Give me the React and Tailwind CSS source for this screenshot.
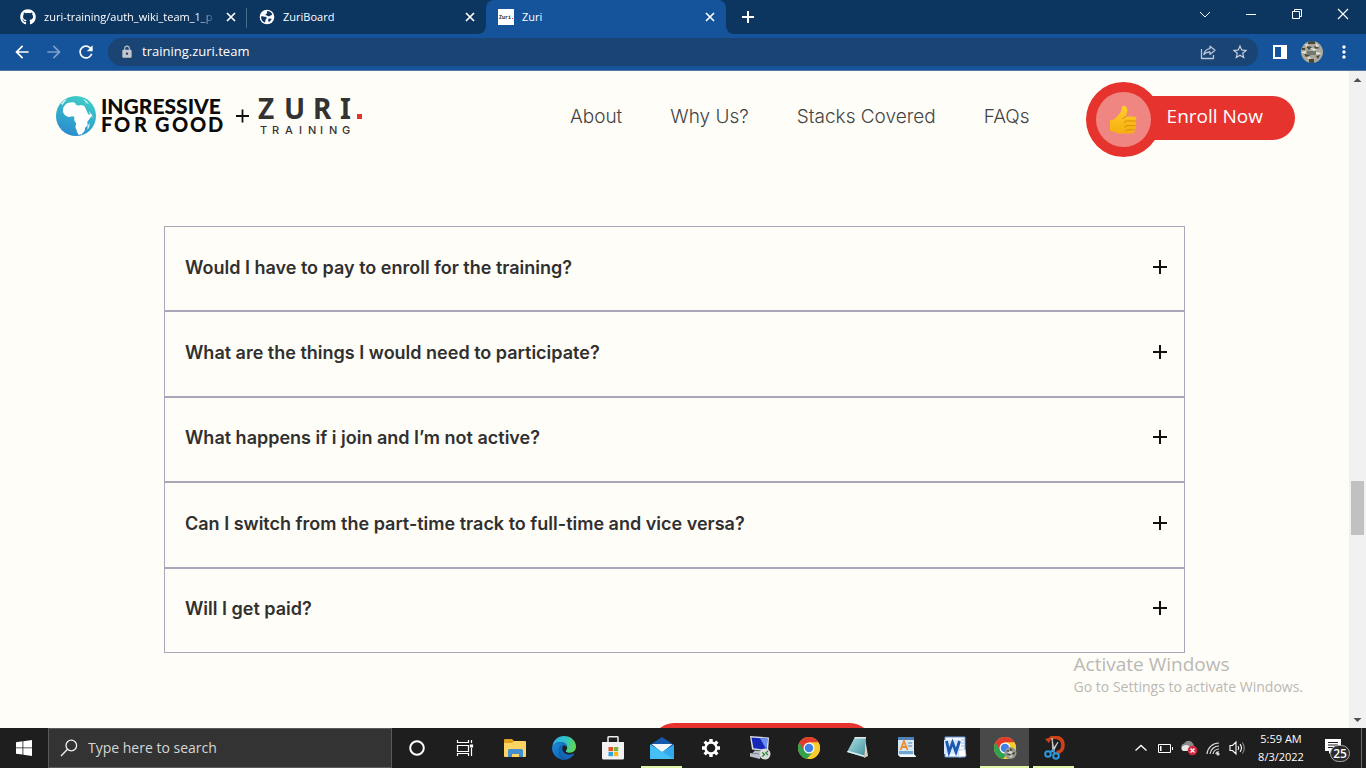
import React from "react";
import { FaGithub } from "react-icons/fa";
import { MdArrowBack, MdArrowForward, MdRefresh, MdLock, MdStarBorder, MdMoreVert } from "react-icons/md";

const questions = [
  "Would I have to pay to enroll for the training?",
  "What are the things I would need to participate?",
  "What happens if i join and I’m not active?",
  "Can I switch from the part-time track to full-time and vice versa?",
  "Will I get paid?",
];

const links = ["About", "Why Us?", "Stacks Covered", "FAQs"];

function GlobeFavicon() {
  return (
    <svg viewBox="0 0 16 16" className="h-4 w-4 shrink-0">
      <circle cx="8" cy="8" r="7.3" fill="#fff" />
      <path d="M2.2 7.2c1.7-.2 2.6.6 4.2.5 1.3 0 1.6 1.2 1 2-.8.9-1.2 1.300-1.100 3.900C3.700 12.800 1.700 10.500 2.200 7.200Z" fill="#0c355f" />
      <path d="M8.300 2.100c2.400.1 4.100 1.200 5 3.300-.7.900-1.700.6-2.200 1.400-.6.900-1.900.5-2.800-.1-.9-.5-1.900-.2-1.700-1.300.1-.8 1.100-.5 1.500-1.200.3-.7-.4-1.500.2-2.100Z" fill="#0c355f" />
      <path d="M9.800 9.600c1-.2 1.900.3 2.900.2-.5 1.500-1.600 2.700-3.100 3.300-.3-1.200-.8-2.900.2-3.500Z" fill="#0c355f" />
    </svg>
  );
}

function ZuriFavicon() {
  return (
    <svg viewBox="0 0 16 16" className="h-4 w-4 shrink-0">
      <rect width="16" height="16" fill="#fff" />
      <text x="1" y="9.700" fontSize="5" fontWeight="700" fontFamily="'Liberation Mono', monospace" fill="#222">Zuri</text>
      <rect x="14" y="9" width="1" height="1" fill="#d33" />
    </svg>
  );
}

function Tab({ icon, title, active, fade, divider }) {
  return (
    <div
      role="tab"
      aria-selected={!!active}
      className={
        active
          ? "relative flex w-60 items-center gap-2 rounded-t-lg bg-[#15539a] pr-2.5 pl-3"
          : "relative flex w-[239px] items-center gap-2 pr-2.5 pl-3"
      }
    >
      {icon}
      <span className={fade ? "min-w-0 flex-1 whitespace-nowrap [mask-image:linear-gradient(to_right,#000_88%,transparent)]" : "flex-1"}>{title}</span>
      <button aria-label={"Close " + title}>
        <svg viewBox="0 0 12 12" className="h-3 w-3" stroke="#fff" strokeWidth="1.700"><path d="m2 2 8 8M10 2l-8 8" /></svg>
      </button>
      {divider && <i className="absolute top-2 right-0 h-5 w-px bg-[#4a6c8f]" />}
      {active && (
        <>
          <svg viewBox="0 0 8 8" className="absolute bottom-0 -left-2 h-2 w-2"><path d="M8 0v8H0a8 8 0 0 0 8-8Z" fill="#15539a" /></svg>
          <svg viewBox="0 0 8 8" className="absolute -right-2 bottom-0 h-2 w-2"><path d="M0 0v8h8a8 8 0 0 1-8-8Z" fill="#15539a" /></svg>
        </>
      )}
    </div>
  );
}

function TabStrip() {
  return (
    <div className="flex h-[34px] shrink-0 bg-[#0c355f] pl-2 text-[11px] text-white">
      <div role="tablist" aria-label="Tabs" className="flex">
        <Tab icon={<FaGithub className="h-4 w-4 shrink-0" />} title="zuri-training/auth_wiki_team_1_p" fade divider />
        <Tab icon={<GlobeFavicon />} title="ZuriBoard" />
        <Tab icon={<ZuriFavicon />} title="Zuri" active />
      </div>
      <button aria-label="New tab" className="flex w-11 items-center justify-center">
        <svg viewBox="0 0 12 12" className="h-3 w-3" stroke="#fff" strokeWidth="2"><path d="M0 6h12M6 0v12" /></svg>
      </button>
      <div className="ml-auto flex">
        <button aria-label="Search tabs" className="flex w-[46px] items-center justify-center pb-1.5">
          <svg viewBox="0 0 12 12" className="h-3 w-3" fill="none" stroke="#fff"><path d="m1 4 5 5 5-5" /></svg>
        </button>
        <button aria-label="Minimize" className="flex w-[46px] items-center justify-center pb-1.5">
          <svg viewBox="0 0 12 12" className="h-3 w-3" fill="none" stroke="#fff"><path d="M1 6.500h10" /></svg>
        </button>
        <button aria-label="Restore" className="flex w-[46px] items-center justify-center pb-1.5">
          <svg viewBox="0 0 12 12" className="h-3 w-3" fill="none" stroke="#fff"><path d="M1.500 3.500h7v7h-7zM3.500 3.500v-2h7v7h-2" /></svg>
        </button>
        <button aria-label="Close window" className="flex w-[46px] items-center justify-center pb-1.5">
          <svg viewBox="0 0 12 12" className="h-3 w-3" fill="none" stroke="#fff" strokeWidth="1.200"><path d="m1 1 10 10M11 1 1 11" /></svg>
        </button>
      </div>
    </div>
  );
}

function Toolbar() {
  return (
    <div className="flex h-[37px] shrink-0 items-center border-b border-[#54779f] bg-[#15539a] px-1.5 text-white">
      <button aria-label="Back" className="flex w-8 justify-center"><MdArrowBack className="h-5 w-5" /></button>
      <button aria-label="Forward" className="flex w-8 justify-center text-[#7ba0cb]"><MdArrowForward className="h-5 w-5" /></button>
      <button aria-label="Reload" className="flex w-8 justify-center"><MdRefresh className="h-5 w-5" /></button>
      <div className="ml-1.5 flex h-7 flex-1 items-center rounded-full bg-[#1a4473] pr-0.5 pl-3">
        <MdLock className="h-3.5 w-3.5 shrink-0 text-[#c3c6ca]" />
        <input aria-label="Address" defaultValue="training.zuri.team" className="ml-2 min-w-0 flex-1 bg-transparent text-[13px] outline-none" />
        <button aria-label="Share" className="flex w-8 justify-center text-[#b9c6d6]">
          <svg viewBox="0 0 16 16" className="h-4 w-4" fill="none" stroke="currentColor" strokeWidth="1.300" strokeLinejoin="round">
            <path d="M1.500 5v9.500h12V11" />
            <path d="M10 2.200 15 6.300l-5 4.100V8c-2.700-.1-4.600.6-6.200 2.600C4.400 7.300 6.300 5 10 4.600Z" />
          </svg>
        </button>
        <button aria-label="Bookmark" className="flex w-8 justify-center text-[#c7d1dd]"><MdStarBorder className="h-[18px] w-[18px]" /></button>
      </div>
      <button aria-label="Side panel" className="ml-1.5 flex w-8 justify-center">
        <svg viewBox="0 0 14 14" className="h-3.5 w-3.5"><path fillRule="evenodd" d="M0 0h14v14H0zM2 2v10h6V2z" fill="#fff" /></svg>
      </button>
      <button aria-label="Profile" className="flex w-8 justify-center">
        <svg viewBox="0 0 22 22" className="h-[22px] w-[22px]">
          <defs><clipPath id="av"><circle cx="11" cy="11" r="11" /></clipPath></defs>
          <g clipPath="url(#av)">
            <rect width="22" height="22" fill="#aaa99c" />
            <path d="M7 0h7v3H7zM1 7h3v2H1zM5 5l6 1-3 3zM13 5l6 2-5 1zM3 13l7 1-5 2zM8 18h5v4H8zM15 15l4-1-2 4z" fill="#45483b" />
            <path d="M4 3l4 1-3 2zM9 7l7 1-3 2zM0 11l5-1-1 3zM14 11l7 1-5 2zM5 17l4-1 1 2zM15 2l3 3-3 1z" fill="#e5e4d8" />
            <path d="M6 10h9v4H6z" fill="#6f7a70" />
          </g>
        </svg>
      </button>
      <button aria-label="Menu" className="flex w-8 justify-center"><MdMoreVert className="h-5 w-5" /></button>
    </div>
  );
}

function Logo() {
  return (
    <svg viewBox="0 0 310 44" className="h-11 w-[310px] shrink-0 overflow-visible" role="img" aria-label="Ingressive for Good and Zuri Training">
      <defs>
        <linearGradient id="globe" x1="0.700" y1="0" x2="0.300" y2="1">
          <stop offset="0" stopColor="#3fcfc6" />
          <stop offset="1" stopColor="#2a8bd0" />
        </linearGradient>
      </defs>
      <circle cx="20" cy="22" r="20" fill="url(#globe)" />
      <path d="M9.500 10.500 12 8.800l5-.6 2.300.8.300 1.500 3.200 1.200 1.200-.8 4.100.9 1.800 3.300 2 4.700 1.100.9 3.100-.4c-.8 3.200-3.200 5.300-4.700 7.300l.1 3.900-2.300 2-.6 3.200-2.800 3.500-3.400.5-1.500-3.300-1.500-4.500.8-3.500-2-3.200.2-3.200-1.500-.8-4.500.7-3.400-1.700-2.100-3.300.4-4.300Z" fill="#fff" />
      <path d="M31.500 31.500 34 29l-.8 4-1.700 3ZM5 9.500 8.500 6 11 5.300 8 8.800 6.500 11ZM26 4.500l4 2 3 3.500-2.500-.8-2-2.700ZM33 17l3 4 .8 3-3-3.500ZM25 37l4-1.500-2 3Z" fill="#fff" opacity=".8" />
      <g fontFamily="Lato, sans-serif" fontWeight="900" fill="#0b0b0b">
        <text x="45" y="20" fontSize="21">INGRESSIVE</text>
        <text x="45 58 78 92 99 116 134 152" y="38" fontSize="20">FOR GOOD</text>
      </g>
      <path d="M180 22h13M186.500 15.500v13" stroke="#111" strokeWidth="1.800" />
      <g fill="#333">
        <text x="202 228 257 284" y="24.500" fontFamily="'Noto Sans', sans-serif" fontWeight="700" fontSize="28">ZURI</text>
        <text x="204 216 229 243 252 264 273 286" y="39.500" fontFamily="Inter, sans-serif" fontWeight="500" fontSize="11">TRAINING</text>
      </g>
      <rect x="301" y="20" width="5" height="5" fill="#e6332e" />
    </svg>
  );
}

function ThumbsUp() {
  return (
    <svg viewBox="0 0 28 30" className="h-[30px] w-7">
      <defs>
        <linearGradient id="thumb" x1="0" y1="0" x2="0" y2="1">
          <stop offset="0" stopColor="#ffd029" />
          <stop offset="1" stopColor="#f5ae10" />
        </linearGradient>
      </defs>
      <path d="M1 15.500c2.500-.5 4-1 5.500-2.500 2.500-2.800 5.500-5 6-8.500.2-2 .7-3.800 2.400-3.700 2.400.1 3.600 2.600 3.300 5.400-.2 2-.9 3.800-1.300 5.300h8c3 0 3.400 3.700 1 4.400 2 .8 1.900 4-.2 4.600 1.600.9 1.300 3.600-.6 4.200 1 1.300.3 3.900-2.100 3.900H11c-4-.1-5.500-2.300-10-2.600Z" fill="url(#thumb)" />
      <path d="M26 16h-8.500c-1.500 0-2.200.9-2 2M25.500 20.600H18c-1.300 0-2 .7-1.800 1.700M24.500 24.800h-6c-1.200 0-1.800.7-1.500 1.600M17 11.500c-1.600.3-2.700 1-3.200 2.200" fill="none" stroke="#df8a0c" strokeWidth="1" strokeLinecap="round" />
    </svg>
  );
}

function Site() {
  return (
    <div className="min-w-0 flex-1 overflow-hidden bg-[#fffdf7] font-[Inter,sans-serif]">
      <header className="flex items-center pt-[11px] pr-[54px] pl-14">
        <a href="#home" className="-mt-2"><Logo /></a>
        <nav className="mr-14 -mt-1 ml-auto flex gap-12 text-[19px] font-light whitespace-nowrap text-[#444]">
          {links.map((l) => <a key={l} href={"#" + l}>{l}</a>)}
        </nav>
        <button className="flex items-center text-[19px] whitespace-nowrap text-white">
          <span className="z-10 flex h-[75px] w-[75px] items-center justify-center rounded-full bg-[#e6332e]">
            <span className="flex h-[55px] w-[55px] items-center justify-center rounded-full bg-[#f08681]"><ThumbsUp /></span>
          </span>
          <span className="mb-1 -ml-8 flex h-11 items-center rounded-full bg-[#e6332e] pr-8 pb-0.5 pl-[38px] font-['Open_Sans',sans-serif]">Enroll Now</span>
        </button>
      </header>
      <main className="mt-[69px]">
        <section aria-label="FAQs" className="mx-[164px] grid h-[427px] grid-rows-5">
          {questions.map((q) => (
            <button key={q} aria-expanded="false" className="flex items-center justify-between border border-[#a9a6b8] pr-4 pb-0.5 pl-5 text-left text-lg font-semibold text-[#303030]">
              {q}
              <svg viewBox="0 0 16 16" className="mb-0.5 h-4 w-4 shrink-0"><path d="M1 8h14M8 1v14" stroke="#111" strokeWidth="2" /></svg>
            </button>
          ))}
        </section>
        <div className="mt-[70px] flex justify-center pl-[174px]">
          <button aria-label="Enroll" className="h-11 w-[220px] rounded-full bg-[#e6332e]" />
        </div>
      </main>
    </div>
  );
}

function Scrollbar() {
  return (
    <div className="flex w-[17px] shrink-0 flex-col items-center bg-[#f1f1f1]">
      <svg viewBox="0 0 17 17" className="h-[17px] w-[17px] shrink-0"><path d="m8.500 7 4 4h-8z" fill="#505050" /></svg>
      <div className="grow-[393] basis-0" />
      <div className="w-[13px] grow-[54] basis-0 bg-[#c1c1c1]" />
      <div className="grow-[176] basis-0" />
      <svg viewBox="0 0 17 17" className="h-[17px] w-[17px] shrink-0"><path d="m8.500 11 4-4h-8z" fill="#505050" /></svg>
    </div>
  );
}

function ChromeIcon({ profile }) {
  return (
    <svg viewBox="0 0 24 24" className="h-6 w-6">
      <circle cx="12" cy="12" r="11" fill="#f9cb2e" />
      <path d="M12 12 2.470 6.500A11 11 0 0 0 10 22.820L16.800 14.800Z" fill="#2fa14f" />
      <path d="M2.470 6.500A11 11 0 0 1 21.530 6.500H12L7.200 14.700Z" fill="#e23b2e" />
      <path d="M12 6.500h9.530A11 11 0 0 1 11 22.960L16.760 14.750Z" fill="#f9cb2e" />
      <circle cx="12" cy="12" r="5.500" fill="#fff" />
      <circle cx="12" cy="12" r="4.300" fill="#3f7fe8" />
      {profile && (
        <g>
          <circle cx="17.500" cy="17" r="6" fill="#969890" />
          <path d="m12.500 15 3-1 1 2zM17 12l3 2-3 1zM13 18l4-1 1 3zM18 17l4-1-1 3z" fill="#43463e" />
          <path d="m14 17 3-2 3 1-2 2zM16 20l4-1-2 3z" fill="#d5d8d0" />
        </g>
      )}
    </svg>
  );
}

const apps = [
  { name: "Cortana", art: <svg viewBox="0 0 24 24" className="h-6 w-6"><circle cx="12" cy="12" r="6.800" fill="none" stroke="#fff" strokeWidth="2" /></svg> },
  { name: "Task View", art: <svg viewBox="0 0 24 24" className="h-6 w-6" fill="none" stroke="#fff" strokeWidth="1.200"><path d="M3.500 4v2.500h11V4M3.500 9.500h11v6h-11zM3.500 20v-2.500h11V20M17.500 4v3M17.500 12v8" /><path d="M16.500 9h2v2h-2z" fill="#fff" /></svg> },
  {
    name: "File Explorer",
    art: (
      <svg viewBox="0 0 24 24" className="h-6 w-6">
        <path d="M1 4q0-1 1-1h7l2 2h11v4H1Z" fill="#e1a11c" />
        <path d="M1 7h8l2-2h11q1 0 1 1v14q0 1-1 1H2q-1 0-1-1Z" fill="#fcd463" />
        <path d="M5 21v-6.500Q5 13 6.500 13h12q1.500 0 1.500 1.500V21h-4v-3H9v3Z" fill="#438fd0" />
      </svg>
    ),
  },
  {
    name: "Microsoft Edge",
    art: (
      <svg viewBox="0 0 24 24" className="h-6 w-6">
        <defs>
          <linearGradient id="edgeTop" x1="0" y1=".3" x2="1" y2=".5"><stop offset="0" stopColor="#2bb1ef" /><stop offset=".55" stopColor="#32c4c4" /><stop offset="1" stopColor="#65d84c" /></linearGradient>
          <linearGradient id="edgeLow" x1="0" y1="0" x2="1" y2="1"><stop offset="0" stopColor="#1d8fe0" /><stop offset="1" stopColor="#0c55a8" /></linearGradient>
        </defs>
        <path d="M.3 11C.8 4.500 5.800 0 12 0c7 0 12 5 12 10.500 0 4-2.800 6.200-6 6.200-2.600 0-4.200-.9-4.200-1.800 0-.8 1.400-1.300 1.400-3.200C15.200 8.300 12.300 6 8.500 6 4.400 6 1.500 8.200.3 11Z" fill="url(#edgeTop)" />
        <path d="M0 12.500C.2 9 3.900 6 8.500 6c3.800 0 6.700 2.300 6.700 5.600-.8-1.600-2.300-2.200-3.600-2.200C8.500 9.400 7 12 7 14.800c0 4.400 3.700 8.300 8 8.700A12 12 0 0 1 0 12.500Z" fill="url(#edgeLow)" />
        <path d="M11.600 9.400C8.500 9.400 7 12 7 14.800c0 4.400 3.700 8.300 8 8.700 3.300-.8 5.900-2.900 7.300-5.400.3-.5-.2-.8-.7-.6-5.500 2.600-11.200-.3-11.200-4.800 0-1.500.4-2.600 1.200-3.300Z" fill="#1467b8" />
      </svg>
    ),
  },
  {
    name: "Microsoft Store",
    art: (
      <svg viewBox="0 0 24 24" className="h-6 w-6">
        <path d="M7 7V1.500q0-.7.7-.7h8.600q.7 0 .7.700V7" fill="none" stroke="#eee" strokeWidth="1.500" />
        <path d="M1 6h22v16q0 1.500-1.500 1.500h-19Q1 23.500 1 22Z" fill="#f2f2f2" />
        <path d="M7.500 11H12v4.200H7.500z" fill="#e5512c" /><path d="M12.800 11h4.400v4.200h-4.400z" fill="#7cb82f" />
        <path d="M7.500 16H12v4.200H7.500z" fill="#27a3e0" /><path d="M12.800 16h4.400v4.200h-4.400z" fill="#f7b91c" />
      </svg>
    ),
  },
  {
    name: "Mail",
    bar: true,
    art: (
      <svg viewBox="0 0 24 24" className="h-6 w-6">
        <path d="M0 9 12 1l12 8v7H0Z" fill="#1559ab" />
        <path d="M1.500 8h21L12 16.500Z" fill="#f1f7fd" />
        <path d="M0 8.500 12 16l12-7.500V23H0Z" fill="#33a8ec" />
        <path d="M0 23V8.500L24 23Z" fill="#45c0f5" />
      </svg>
    ),
  },
  {
    name: "Settings",
    art: (
      <svg viewBox="0 0 24 24" className="h-6 w-6" fill="none" stroke="#fff">
        <circle cx="12" cy="12" r="5.500" strokeWidth="2.400" />
        <path d="M12 3v3.500M12 17.500V21M3 12h3.500M17.500 12H21M5.640 5.640 8.100 8.100M15.900 15.900l2.460 2.460M5.640 18.360 8.100 15.900M15.900 8.100l2.460-2.460" strokeWidth="3.400" />
      </svg>
    ),
  },
  {
    name: "Remote Desktop",
    art: (
      <svg viewBox="0 0 24 24" className="h-6 w-6">
        <path d="m2 0 19 1.500-1 14-16-2Z" fill="#d7dde8" /><path d="m3.500 1.500 16 1.300-1 11-13-1.500Z" fill="#1526b8" /><path d="m12 2.200 7.500.6-1 11Z" fill="#6b8df0" />
        <path d="m7 14.500 8 1 .5 3-11-1.500ZM2 17l11 1.500-1 4.500-10-2.500Z" fill="#b9c0cc" />
        <circle cx="17" cy="18" r="5.500" fill="#d9ddd8" /><path d="m14.300 16.500 2.200 2-2.200 2M20 15l-2.200 2 2.200 2" fill="none" stroke="#2b7c38" strokeWidth="1.200" />
      </svg>
    ),
  },
  { name: "Google Chrome", art: <ChromeIcon /> },
  {
    name: "Notepad",
    art: (
      <svg viewBox="0 0 24 24" className="h-6 w-6">
        <defs><linearGradient id="note" x1="0" y1="0" x2="1" y2="1"><stop offset="0" stopColor="#b4e5e9" /><stop offset="1" stopColor="#3d8f9d" /></linearGradient></defs>
        <path d="m19 2 3 18-4 2Z" fill="#d9d5c6" /><path d="M9 1h11l-2 20L1 16Z" fill="url(#note)" /><path d="m1 16 17 5 .3-1.500L2 14.800Z" fill="#dff3f4" /><path d="M9 1h11v1.500H8.200Z" fill="#e2ebec" />
      </svg>
    ),
  },
  {
    name: "WordPad",
    art: (
      <svg viewBox="0 0 24 24" className="h-6 w-6">
        <path d="M3 1h16v17l2 3H5l-2-2Z" fill="#d6e8f5" /><path d="M3 1h16v3H3z" fill="#4d83ba" />
        <path d="m5.500 14 3.500-9 3.500 9M6.800 11h4.500" fill="none" stroke="#ef8a2c" strokeWidth="1.800" />
        <path d="M13 7h4M13 10h4" stroke="#587fa6" /><path d="M4 15h14v3H4z" fill="#6ea7d4" /><path d="M5 19h15l1 2H5Z" fill="#f5fafd" />
      </svg>
    ),
  },
  {
    name: "Word",
    art: (
      <svg viewBox="0 0 24 24" className="h-6 w-6">
        <path d="M1 1h20v20H1z" fill="#f4f7fb" stroke="#6a9bdc" /><path d="M0 4h16v14H0z" fill="#d4e6fb" />
        <path d="m2.500 5 2.500 11L8.500 6.500 12 16l3.500-11" fill="none" stroke="#1e57ae" strokeWidth="2.800" /><path d="M17 4h3M17 7h3M17 10h3" stroke="#9db9dd" /><path d="m14 15 7-2 1 7-7 1Z" fill="#fff" stroke="#a8c4e8" strokeWidth=".7" />
      </svg>
    ),
  },
  { name: "Google Chrome window", active: true, art: <ChromeIcon profile /> },
  {
    name: "Snipping Tool",
    bar: true,
    art: (
      <svg viewBox="0 0 24 24" className="h-6 w-6">
        <path d="M8 2.500C14-.5 21 2 21 9c0 4.500-2.500 7.500-6.500 7.500" fill="none" stroke="#cf4218" strokeWidth="3.600" /><path d="m3 3 7-2-3 6Z" fill="#cf4218" />
        <path d="m10 2 2.200 13-1.500.5ZM16 6l-5 10-1.500-1Z" fill="#f3f3f3" stroke="#c9c9c9" strokeWidth=".8" />
        <circle cx="6" cy="18" r="2.800" fill="none" stroke="#2b98df" strokeWidth="2" /><circle cx="14" cy="20" r="2.800" fill="none" stroke="#2b98df" strokeWidth="2" />
        <path d="m8 16.500 3-2.500 2 4" fill="none" stroke="#2b98df" strokeWidth="1.800" />
      </svg>
    ),
  },
];

function Taskbar() {
  return (
    <footer className="flex h-10 shrink-0 bg-[#1e1e1e] text-white">
      <button aria-label="Start" className="flex w-12 shrink-0 items-center justify-center">
        <svg viewBox="0 0 16 16" className="h-4 w-4" fill="#fff"><path d="M0 2.200 6.500 1.300v6.200H0zM7.300 1.200 16 0v7.500H7.300zM0 8.300h6.500v6.300L0 13.700zM7.300 8.300H16V16l-8.700-1.200z" /></svg>
      </button>
      <label className="flex w-[344px] items-center gap-2.5 border border-[#5a5a5a] bg-[#333] pl-[11px]">
        <svg viewBox="0 0 18 18" className="h-[18px] w-[18px] shrink-0" fill="none" stroke="#f0f0f0" strokeWidth="1.300"><circle cx="11.300" cy="6.500" r="5.300" /><path d="M7.500 10.300 1 17" /></svg>
        <input aria-label="Search" placeholder="Type here to search" className="min-w-0 flex-1 bg-transparent text-sm outline-none placeholder:text-[#d6d6d6]" />
      </label>
      <div className="flex">
        {apps.map((a) => (
          <button key={a.name} aria-label={a.name} className={a.active ? "relative flex w-[49px] items-center justify-center bg-[#494949]" : "relative flex w-[49px] items-center justify-center"}>
            {a.art}
            {a.active && <i className="absolute inset-x-0 bottom-0 h-0.5 bg-[#dff5a8]" />}
            {a.bar && <i className="absolute inset-x-1 bottom-0 h-0.5 bg-[#dff5a8]" />}
          </button>
        ))}
      </div>
      <div className="ml-auto flex items-stretch">
        <button aria-label="Hidden icons" className="flex w-6 items-center justify-center"><svg viewBox="0 0 14 14" className="h-3.5 w-3.5" fill="none" stroke="#fff" strokeWidth="1.300"><path d="m1.500 9.500 5.500-5 5.500 5" /></svg></button>
        <button aria-label="Battery" className="flex w-6 items-center justify-center"><svg viewBox="0 0 16 16" className="h-4 w-4" fill="none" stroke="#fff"><path d="M1.500 4.500h12v8h-12zM15.500 7v3" /><path d="M3 6h1.500v5H3z" fill="#fff" stroke="none" /></svg></button>
        <button aria-label="OneDrive" className="flex w-6 items-center justify-center">
          <svg viewBox="0 0 18 16" className="h-4 w-[18px]"><path d="M3 10a3.500 3.500 0 0 1 1-6.500A5 5 0 0 1 13 3.500L15 8Z" fill="#8b8b8b" /><path d="M3 11a3 3 0 0 1 1-5.500c3-1 5 0 7 2.500v3Z" fill="#e8e8e8" /><circle cx="12.500" cy="10.500" r="4.800" fill="#d2293e" /><path d="m10.500 8.500 4 4M14.500 8.500l-4 4" stroke="#fff" strokeWidth="1.300" /></svg>
        </button>
        <button aria-label="Wi-Fi" className="flex w-6 items-center justify-center"><svg viewBox="0 0 16 16" className="h-4 w-4" fill="none" stroke="#ddd" strokeWidth="1.200"><path d="M2 14A12 12 0 0 1 14 3M5 14A9 9 0 0 1 14 6M8 14A6 6 0 0 1 14 9M10.700 14A3 3 0 0 1 14 12" /><circle cx="13" cy="14" r="1" fill="#fff" /></svg></button>
        <button aria-label="Volume" className="flex w-6 items-center justify-center"><svg viewBox="0 0 17 16" className="h-4 w-[17px]" fill="none" stroke="#fff" strokeWidth="1.100"><path d="M1 5.500h2.500L7 2v12l-3.500-3.500H1zM9 6q1.500 2 0 4M11 4.200q3 3.800 0 7.600" /><path d="M13.300 2.500q4 5.500 0 11" stroke="#888" /></svg></button>
        <div className="flex w-16 flex-col items-center justify-center text-[11px] leading-[18px] whitespace-nowrap"><time>5:59 AM</time><time>8/3/2022</time></div>
        <button aria-label="Notifications" className="flex w-12 items-center justify-center pt-1">
          <svg viewBox="0 0 28 26" className="h-[26px] w-7">
            <path d="M2 2h16v12H9l-3 3v-3H2z" fill="#fff" /><path d="M5 5.500h10M5 8h10M5 10.500h10" stroke="#1e1e1e" />
            <rect x="7.500" y="8.500" width="19" height="16" rx="8" fill="#2b2b2b" stroke="#aaa" />
            <text x="17" y="21" textAnchor="middle" fontSize="12" fontWeight="600" fontFamily="'Open Sans', sans-serif" fill="#fff">25</text>
          </svg>
        </button>
        <button aria-label="Show desktop" className="w-[5px] border-l border-[#686868]" />
      </div>
    </footer>
  );
}

export default function App() {
  return (
    <div className="flex h-screen flex-col overflow-hidden font-['Open_Sans',sans-serif]">
      <TabStrip />
      <Toolbar />
      <div className="relative flex min-h-0 flex-1">
        <Site />
        <Scrollbar />
        <div className="pointer-events-none absolute right-[63px] bottom-8 text-[#b9b8b4]">
          <p className="text-[19px] leading-7">Activate Windows</p>
          <p className="text-sm leading-[18px]">Go to Settings to activate Windows.</p>
        </div>
      </div>
      <Taskbar />
    </div>
  );
}
